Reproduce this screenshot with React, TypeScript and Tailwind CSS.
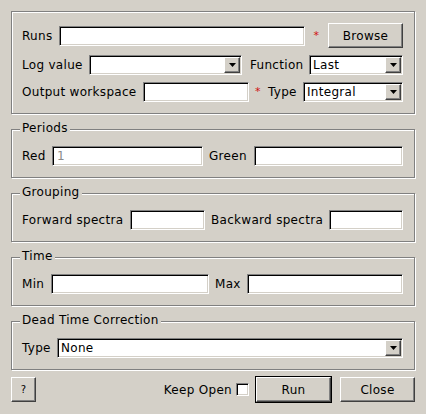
import React from "react";

const sunken =
  "bg-white border border-t-[#808080] border-l-[#808080] border-b-white border-r-white shadow-[inset_1px_1px_0_#000,inset_-1px_-1px_0_#d4d0c8]";
const raised =
  "bg-[#d4d0c8] border border-t-white border-l-white border-b-[#404040] border-r-[#404040] shadow-[inset_-1px_-1px_0_#808080]";

function Input({ className, value, gray }: { className: string; value?: string; gray?: boolean }) {
  return (
    <div className={`${className} h-[20px] ${sunken} flex items-center pl-[4px] ${gray ? "text-[#8a8a8a]" : "text-black"}`}>
      {value}
    </div>
  );
}

function Combo({ className, value }: { className: string; value?: string }) {
  return (
    <div className={`${className} h-[20px] ${sunken} flex p-[1px]`}>
      <div className="flex-1 flex items-center pl-[2px] text-black">{value}</div>
      <div className={`w-[16px] h-[16px] ${raised} flex items-center justify-center`}>
        <svg width="7" height="4" viewBox="0 0 7 4">
          <path d="M0 0H7L3.5 4Z" fill="#000" />
        </svg>
      </div>
    </div>
  );
}

function Star({ className }: { className: string }) {
  return <div className={`${className} text-center text-[#d01010] text-[11px]`}>*</div>;
}

function Group({ title, children }: { title: string; children: React.ReactNode }) {
  return (
    <div className="relative mt-[15px] h-[49px] border border-[#808080] shadow-[inset_1px_1px_0_#fff,1px_1px_0_#fff] pl-[10px] pr-[10px] pt-[16px]">
      <span className="absolute top-[-9px] left-[8px] px-[2px] bg-[#d4d0c8] leading-[14px]">{title}</span>
      {children}
    </div>
  );
}

export default function App() {
  return (
    <div className="w-[426px] h-[414px] bg-[#d4d0c8] px-[11px] pt-[11px] flex flex-col font-['DejaVu_Sans',sans-serif] text-[12px] leading-[14px] tracking-[0.3px] text-black">
      <div className="h-[103px] border border-[#808080] shadow-[inset_1px_1px_0_#fff,1px_1px_0_#fff] pl-[10px] pr-[10px] pt-[11px] flex flex-col">
        <div className="flex items-center h-[25px]">
          <div className="w-[37px]">Runs</div>
          <Input className="w-[246px]" />
          <Star className="w-[23px]" />
          <div className={`w-[75px] h-[25px] ${raised} flex items-center justify-center`}>Browse</div>
        </div>
        <div className="flex items-center h-[20px] mt-[7px]">
          <div className="w-[67px]">Log value</div>
          <Combo className="w-[153px]" />
          <div className="w-[67px] pl-[8px]">Function</div>
          <Combo className="w-[94px]" value="Last" />
        </div>
        <div className="flex items-center h-[20px] mt-[7px]">
          <div className="w-[121px]">Output workspace</div>
          <Input className="w-[106px]" />
          <Star className="w-[18px]" />
          <div className="w-[36px] pl-[1px]">Type</div>
          <Combo className="w-[100px]" value="Integral" />
        </div>
      </div>

      <Group title="Periods">
        <div className="flex items-center h-[20px]">
          <div className="w-[30px]">Red</div>
          <Input className="w-[151px]" value="1" gray />
          <div className="w-[51px] pl-[6px]">Green</div>
          <Input className="w-[149px]" />
        </div>
      </Group>

      <Group title="Grouping">
        <div className="flex items-center h-[20px]">
          <div className="w-[108px]">Forward spectra</div>
          <Input className="w-[75px]" />
          <div className="w-[124px] pl-[6px]">Backward spectra</div>
          <Input className="w-[74px]" />
        </div>
      </Group>

      <Group title="Time">
        <div className="flex items-center h-[20px]">
          <div className="w-[29px]">Min</div>
          <Input className="w-[158px]" />
          <div className="w-[38px] pl-[6px]">Max</div>
          <Input className="w-[156px]" />
        </div>
      </Group>

      <Group title="Dead Time Correction">
        <div className="flex items-center h-[20px]">
          <div className="w-[35px]">Type</div>
          <Combo className="w-[346px]" value="None" />
        </div>
      </Group>

      <div className="flex items-center h-[27px] mt-[6px]">
        <div className={`w-[25px] h-[25px] ${raised} flex items-center justify-center text-[10px]`}>?</div>
        <div className="flex-1" />
        <div>Keep Open</div>
        <div className={`w-[13px] h-[13px] ml-[4px] mr-[6px] ${sunken}`} />
        <div className="w-[77px] h-[27px] border border-black flex">
          <div className={`flex-1 ${raised} flex items-center justify-center`}>Run</div>
        </div>
        <div className={`w-[75px] h-[25px] ml-[8px] ${raised} flex items-center justify-center`}>Close</div>
      </div>
    </div>
  );
}
